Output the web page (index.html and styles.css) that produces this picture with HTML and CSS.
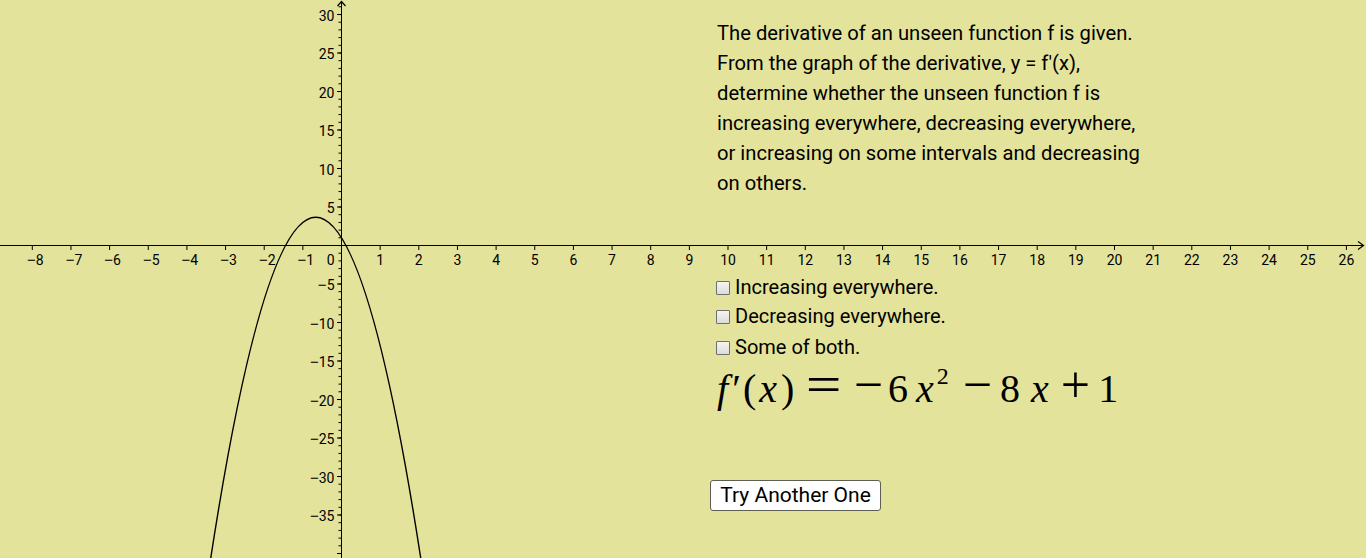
FILE: index.html
```html
<!DOCTYPE html>
<html lang="en">
<head>
<meta charset="utf-8">
<title>Derivative graph</title>
<link rel="stylesheet" href="styles.css">
</head>
<body>
<div class="applet">
  <svg class="canvas" width="1366" height="558" viewBox="0 0 1366 558" xmlns="http://www.w3.org/2000/svg">
    <defs>
      <pattern id="xticks" patternUnits="userSpaceOnUse" x="341" y="246" width="38.65" height="4">
        <rect x="0" y="0" width="1" height="4" class="ink"/>
      </pattern>
      <pattern id="yminor" patternUnits="userSpaceOnUse" x="338.5" y="245" width="3" height="7.7">
        <rect x="0" y="0" width="3" height="1" class="ink"/>
      </pattern>
      <pattern id="ymajor" patternUnits="userSpaceOnUse" x="337" y="245" width="4.5" height="38.5">
        <rect x="0" y="0" width="4.5" height="1" class="ink"/>
      </pattern>
    </defs>
    <!-- axes -->
    <rect x="0" y="245" width="1363" height="1" class="ink"/>
    <rect x="341" y="2" width="1" height="556" class="ink"/>
    <rect x="28" y="246" width="1330" height="4" fill="url(#xticks)"/>
    <rect x="338.5" y="6" width="3" height="552" fill="url(#yminor)"/>
    <rect x="337" y="14" width="4.5" height="540" fill="url(#ymajor)"/>
    <path class="arrow" d="M1358 241.5 L1363.5 245.5 L1358 249.5"/>
    <path class="arrow" d="M337.5 6 L341.5 1.5 L345.5 6"/>
    <!-- curve -->
    <path class="curve" d="M210.28 561.17 Q315.74 -126.64 421.2 561.17"/>
    <!-- x labels -->
    <g class="xlabels">
      <text x="35.3" y="265"><tspan class="m">−</tspan>8</text>
      <text x="73.95" y="265"><tspan class="m">−</tspan>7</text>
      <text x="112.6" y="265"><tspan class="m">−</tspan>6</text>
      <text x="151.25" y="265"><tspan class="m">−</tspan>5</text>
      <text x="189.9" y="265"><tspan class="m">−</tspan>4</text>
      <text x="228.55" y="265"><tspan class="m">−</tspan>3</text>
      <text x="267.2" y="265"><tspan class="m">−</tspan>2</text>
      <text x="305.85" y="265"><tspan class="m">−</tspan>1</text>
      <text x="380.15" y="265">1</text>
      <text x="418.8" y="265">2</text>
      <text x="457.45" y="265">3</text>
      <text x="496.1" y="265">4</text>
      <text x="534.75" y="265">5</text>
      <text x="573.4" y="265">6</text>
      <text x="612.05" y="265">7</text>
      <text x="650.7" y="265">8</text>
      <text x="689.35" y="265">9</text>
      <text x="728" y="265">10</text>
      <text x="766.65" y="265">11</text>
      <text x="805.3" y="265">12</text>
      <text x="843.95" y="265">13</text>
      <text x="882.6" y="265">14</text>
      <text x="921.25" y="265">15</text>
      <text x="959.9" y="265">16</text>
      <text x="998.55" y="265">17</text>
      <text x="1037.2" y="265">18</text>
      <text x="1075.85" y="265">19</text>
      <text x="1114.5" y="265">20</text>
      <text x="1153.15" y="265">21</text>
      <text x="1191.8" y="265">22</text>
      <text x="1230.45" y="265">23</text>
      <text x="1269.1" y="265">24</text>
      <text x="1307.75" y="265">25</text>
      <text x="1346.4" y="265">26</text>
    </g>
    <g class="ylabels">
      <text x="334.5" y="265">0</text>
      <text x="334.5" y="20.5">30</text>
      <text x="334.5" y="59">25</text>
      <text x="334.5" y="97.5">20</text>
      <text x="334.5" y="136">15</text>
      <text x="334.5" y="174.5">10</text>
      <text x="334.5" y="213">5</text>
      <text x="334.5" y="290"><tspan class="m">−</tspan>5</text>
      <text x="334.5" y="328.5"><tspan class="m">−</tspan>10</text>
      <text x="334.5" y="367"><tspan class="m">−</tspan>15</text>
      <text x="334.5" y="405.5"><tspan class="m">−</tspan>20</text>
      <text x="334.5" y="444"><tspan class="m">−</tspan>25</text>
      <text x="334.5" y="482.5"><tspan class="m">−</tspan>30</text>
      <text x="334.5" y="521"><tspan class="m">−</tspan>35</text>
    </g>
  </svg>

  <p class="prompt">The derivative of an unseen function f is given.<br>From the graph of the derivative, y = f′(x),<br>determine whether the unseen function f is<br>increasing everywhere, decreasing everywhere,<br>or increasing on some intervals and decreasing<br>on others.</p>

  <div class="choices">
    <label class="choice"><span class="box"></span>Increasing everywhere.</label>
    <label class="choice"><span class="box"></span>Decreasing everywhere.</label>
    <label class="choice last"><span class="box"></span>Some of both.</label>
  </div>

  <div class="formula"><i class="f">f</i><span class="prime">′</span><span class="lp">(</span><i>x</i><span class="rp">)</span><span class="op eq">=</span><span class="op m1">−</span><span class="d6">6</span><i class="x1">x</i><sup>2</sup><span class="op m2">−</span><span>8</span><i class="x2">x</i><span class="op plus">+</span><span>1</span></div>

  <button class="try" type="button">Try Another One</button>
</div>
</body>
</html>
```
FILE: styles.css
```css
html, body {
  margin: 0;
  padding: 0;
}
body {
  background: #e4e39b;
  font-family: Roboto, "Liberation Sans", sans-serif;
  color: #000;
  overflow: hidden;
}
.applet {
  position: relative;
  width: 1366px;
  height: 558px;
  background: #e4e39b;
  overflow: hidden;
}
.canvas {
  position: absolute;
  left: 0;
  top: 0;
  display: block;
}
.ink { fill: #000; }
.arrow {
  fill: none;
  stroke: #000;
  stroke-width: 1.2;
}
.curve {
  fill: none;
  stroke: #000;
  stroke-width: 1.4;
}
.xlabels text, .ylabels text {
  font-family: Roboto, "Liberation Sans", sans-serif;
  font-size: 14px;
  fill: #000;
}
.xlabels text { text-anchor: middle; }
.ylabels text { text-anchor: end; }
.xlabels .m, .ylabels .m {
  font-family: "Liberation Sans", sans-serif;
  font-size: 15px;
}

.prompt {
  position: absolute;
  left: 717px;
  top: 18px;
  margin: 0;
  font-size: 20.2px;
  line-height: 30px;
  white-space: nowrap;
}

.choices {
  position: absolute;
  left: 716px;
  top: 272px;
  display: flex;
  flex-direction: column;
  font-size: 20px;
}
.choice {
  display: flex;
  align-items: center;
  gap: 5px;
  height: 29px;
}
.choice.last { margin-top: 2px; }
.box {
  width: 12px;
  height: 12px;
  border: 1px solid #6f6f6f;
  border-radius: 1px;
  background: linear-gradient(#f4f4f4, #dcdcdc);
  flex: none;
  margin-top: 2px;
}

.formula {
  position: absolute;
  left: 717px;
  top: 364px;
  font-family: "Liberation Serif", "DejaVu Serif", serif;
  font-size: 40px;
  line-height: 50px;
  white-space: nowrap;
}
.formula i { font-style: italic; }
.formula .prime { margin-left: 4px; margin-right: 2px; }
.formula .lp { margin-right: 3px; }
.formula .rp { margin-left: 4px; }
.formula sup {
  font-size: 24px;
  vertical-align: 18px;
  line-height: 0;
  margin-left: 3px;
}
.formula .op {
  display: inline-block;
  font-size: 52px;
  line-height: 0;
}
.formula .eq {
  margin: 0 8px 0 15px;
  transform: scaleX(1.22);
}
.formula .m1 { margin: 0 5px 0 7px; }
.formula .x1 { margin-left: 8px; }
.formula .m2 { margin: 0 8px 0 14px; }
.formula .x2 { margin-left: 11px; }
.formula .plus { margin: 0 8px 0 12px; }

.try {
  position: absolute;
  left: 710px;
  top: 480px;
  width: 171px;
  height: 31px;
  box-sizing: border-box;
  margin: 0;
  padding: 0;
  border: 1px solid #5e5e52;
  border-radius: 3px;
  background: #fff;
  font-family: Roboto, "Liberation Sans", sans-serif;
  font-size: 21px;
  color: #000;
  line-height: 29px;
  text-align: center;
}
```
